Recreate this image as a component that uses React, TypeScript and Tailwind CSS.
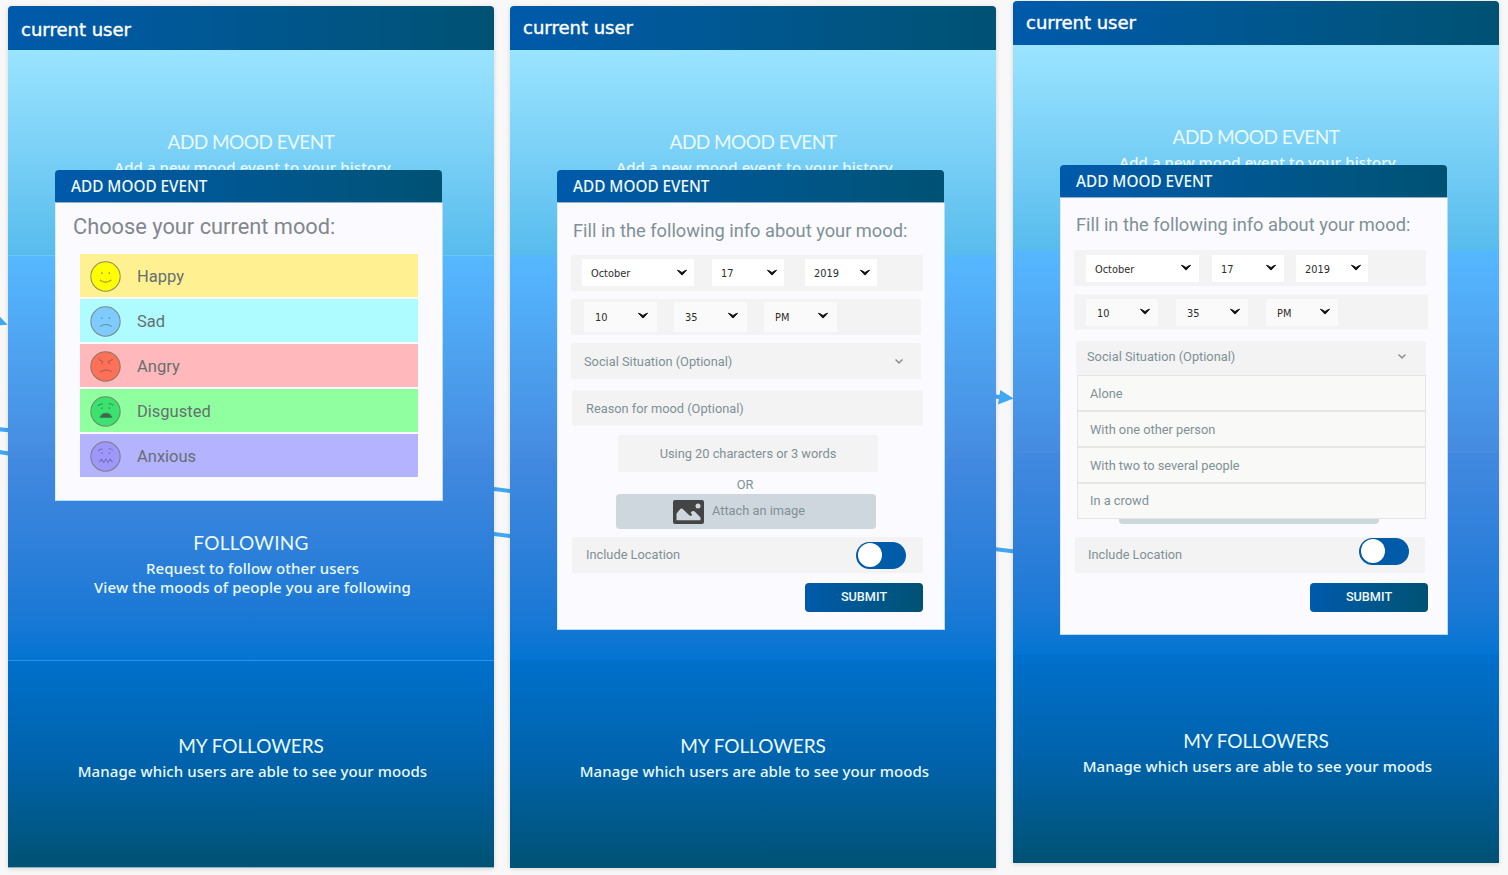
import type { ReactNode } from "react";

const NAV = "bg-linear-to-r from-[#005aab] via-[#00578f] to-[#005273]";

function Chevron({ className = "" }: { className?: string }) {
  return (
    <svg viewBox="0 0 12 8" className={`h-[8px] w-[12px] shrink-0 ${className}`}>
      <path d="M1.300 1.200Q3.500 1.300 6 3.600Q8.500 1.300 10.700 1.200L6.300 5.900H5.700Z" fill="#111" stroke="#111" strokeWidth="0.8" strokeLinejoin="round" />
    </svg>
  );
}

function ThinChevron({ className = "" }: { className?: string }) {
  return (
    <svg viewBox="0 0 10 7" className={`h-[7px] w-[10px] shrink-0 ${className}`}>
      <path d="M1.500 1.500 5 4.900 8.500 1.500" fill="none" stroke="#8d9496" strokeWidth="1.500" />
    </svg>
  );
}

function Select({ value, className }: { value: string; className: string }) {
  return (
    <div className={`flex items-center justify-between font-['DejaVu_Sans',sans-serif] text-[9.800px] leading-[12px] text-[#2c2c2c] ${className}`}>
      <span className="pt-[3px]">{value}</span>
      <Chevron />
    </div>
  );
}

type Mood = { name: string; row: string; fill: string; stroke: string; face: ReactNode };

const MOODS: Mood[] = [
  {
    name: "Happy",
    row: "bg-[#fff192]",
    fill: "#ffff00",
    stroke: "#8f8a3c",
    face: <path d="M9.500 18.300Q15 22.800 20.800 18.300" />,
  },
  {
    name: "Sad",
    row: "bg-[#aefcff]",
    fill: "#7fcbff",
    stroke: "#5c93ab",
    face: <path d="M9.500 20Q15.500 15.800 21 19.800" />,
  },
  {
    name: "Angry",
    row: "bg-[#ffb8bb]",
    fill: "#ff7059",
    stroke: "#a35a55",
    face: (
      <>
        <path d="M9.500 20.500Q15.500 16.500 21 19.800" />
        <path d="M8.500 8.300 13 10.500M21.800 8.300 17 10.500" />
      </>
    ),
  },
  {
    name: "Disgusted",
    row: "bg-[#8fff9f]",
    fill: "#3ce270",
    stroke: "#2f8e50",
    face: (
      <>
        <path d="M9.800 20.800Q11 16.800 15.500 16.700 20 16.800 21 20.800Z" fill="#505c50" />
        <path d="M7.500 9.500Q9.500 7.500 12.500 7.800M18 7.500Q21 7.300 22.500 9" />
      </>
    ),
  },
  {
    name: "Anxious",
    row: "bg-[#b3b3ff]",
    fill: "#a097fb",
    stroke: "#7771bd",
    face: (
      <>
        <path d="M9 20.500 11.300 17.500 13.300 20.800 15.500 17.500 17.500 20.800 19.500 17.500 21.800 20.500" />
        <path d="M8 9.800Q9.500 7.700 12.300 7.800M18 7.600Q21 7.500 22 9.300" />
      </>
    ),
  },
];

function MoodRow({ mood }: { mood: Mood }) {
  return (
    <li className={`flex h-[43px] items-center pl-[10px] ${mood.row}`}>
      <svg viewBox="0 0 30 30" className="mt-px h-[31px] w-[31px]" fill="none" stroke={mood.stroke} strokeWidth="1">
        <circle cx="15" cy="15" r="14.200" fill={mood.fill} stroke="#6f7460" strokeOpacity="0.8" />
        <circle cx="11.500" cy="11.800" r="0.800" fill={mood.stroke} stroke="none" />
        <circle cx="18.700" cy="11.800" r="0.800" fill={mood.stroke} stroke="none" />
        {mood.face}
      </svg>
      <span className="mt-px ml-[16px] h-[18px] overflow-hidden text-[16.500px] leading-[20px] text-[#666f70]">{mood.name}</span>
    </li>
  );
}

function Caption({ title, className, titleClass = "", children }: { title: string; className: string; titleClass?: string; children: ReactNode }) {
  return (
    <div className={`text-center text-[#e9faff] ${className}`}>
      <h2 className={`font-['Lato',sans-serif] text-[19px] leading-[24px] ${titleClass}`}>{title}</h2>
      <div className="mt-[4px] pl-[3px] font-['Noto_Sans',sans-serif] text-[15px] leading-[19px] font-medium tracking-[0.080px]">{children}</div>
    </div>
  );
}

function Screen({
  className = "",
  userClass = "",
  divided = false,
  following,
  children,
}: {
  className?: string;
  userClass?: string;
  divided?: boolean;
  following?: ReactNode;
  children: ReactNode;
}) {
  return (
    <section className={`relative flex h-[862px] w-[486px] shrink-0 flex-col overflow-hidden rounded-t-[4px] shadow-[0_1px_5px_rgba(0,0,0,0.14)] ${className}`}>
      <header className={`flex h-[44px] shrink-0 items-center pl-[13px] ${NAV}`}>
        <h1 className={`font-['DejaVu_Sans',sans-serif] text-[18px] leading-[22px] text-white [-webkit-text-stroke:0.4px_white] ${userClass}`}>current user</h1>
      </header>
      <div className="h-[205px] shrink-0 bg-linear-to-b from-[#9ae4ff] to-[#57bced]">
        <Caption title="ADD MOOD EVENT" titleClass="tracking-[-0.550px]" className="pt-[80px]">
          Add a new mood event to your history
        </Caption>
      </div>
      <div className={`h-[203px] shrink-0 bg-linear-to-b from-[#56b8ff] to-[#458be0] ${divided ? "border-t border-[#6ac6fb]" : ""}`} />
      <div className="h-[202px] shrink-0 bg-linear-to-b from-[#4289e0] to-[#0274d2]">{following}</div>
      <div className={`grow bg-linear-to-b from-[#0070cc] via-[#0062aa] to-[#005273] ${divided ? "border-t border-t-[#2d93e2]" : ""}`}>
        <Caption title="MY FOLLOWERS" titleClass="tracking-[-0.050px]" className={divided ? "pt-[73px]" : "pt-[74px]"}>
          Manage which users are able to see your moods
        </Caption>
      </div>
      {children}
    </section>
  );
}

function Modal({ className, children }: { className: string; children: ReactNode }) {
  return (
    <div className={`absolute top-[164px] left-[47px] flex w-[388px] flex-col font-['Roboto',sans-serif] ${className}`}>
      <div className={`flex h-[32px] w-[387px] shrink-0 items-center rounded-t-[4px] pl-[16px] ${NAV}`}>
        <h3 className="font-['Noto_Sans',sans-serif] text-[15.300px] leading-[20px] font-medium text-[#eefaff]">ADD MOOD EVENT</h3>
      </div>
      <div className="flex grow flex-col border border-t-[#8fb0cc] border-r-[#b9dcf5] border-b-[#b9dcf5] border-l-[#dcebfb] bg-[#fbfaff]">{children}</div>
    </div>
  );
}

function Toggle({ className = "" }: { className?: string }) {
  return (
    <div className={`flex h-[27px] w-[50px] items-center rounded-full bg-[#005ba9] pl-[2px] ${className}`}>
      <div className="size-[24px] rounded-full bg-white" />
    </div>
  );
}

function Submit({ className }: { className: string }) {
  return (
    <button className={`h-[29px] w-[118px] shrink-0 rounded-[4px] pb-[2px] text-[12.700px] leading-[16px] font-medium text-[#f0f8ff] ${NAV} ${className}`}>SUBMIT</button>
  );
}

const FIELD = "flex shrink-0 items-center rounded-[2px] bg-[#f3f3f3] text-[12.800px] leading-[16px] text-[#7f9197]";
const PROMPT = "text-[18.250px] leading-[22px] text-[#7f9197]";

function EventForm() {
  return (
    <>
      <p className={`mt-[17px] ml-[15px] ${PROMPT}`}>Fill in the following info about your mood:</p>
      <div className={`mt-[13px] ml-[13px] h-[36px] w-[352px] ${FIELD}`}>
        <Select value="October" className="mb-px ml-[11px] h-[27px] w-[112px] bg-white pr-[6px] pl-[9px]" />
        <Select value="17" className="mb-px ml-[18px] h-[27px] w-[72px] bg-white pr-[6px] pl-[9px]" />
        <Select value="2019" className="mb-px ml-[21px] h-[27px] w-[72px] bg-white pr-[6px] pl-[9px]" />
      </div>
      <div className={`mt-[8px] ml-[13px] h-[36px] w-[350px] ${FIELD}`}>
        <Select value="10" className="ml-[13px] h-[30px] w-[73px] bg-[#fafafa] pr-[8px] pb-[2px] pl-[11px]" />
        <Select value="35" className="ml-[17px] h-[30px] w-[73px] bg-[#fafafa] pr-[8px] pb-[2px] pl-[11px]" />
        <Select value="PM" className="ml-[17px] h-[30px] w-[73px] bg-[#fafafa] pr-[8px] pb-[2px] pl-[11px]" />
      </div>
      <div className={`mt-[8px] ml-[13px] h-[36px] w-[350px] justify-between pt-px pr-[17px] pl-[13px] ${FIELD}`}>
        Social Situation (Optional)
        <ThinChevron />
      </div>
      <div className={`mt-[11px] ml-[14px] h-[36px] w-[351px] pt-px pl-[14px] ${FIELD}`}>Reason for mood (Optional)</div>
      <div className={`mt-[9px] ml-[60px] h-[37px] w-[260px] justify-center ${FIELD}`}>Using 20 characters or 3 words</div>
      <p className="mt-[5px] ml-[57px] h-[17px] w-[260px] text-center text-[12.800px] leading-[16px] text-[#7f9197]">OR</p>
      <div className="ml-[58px] flex h-[35px] w-[260px] shrink-0 items-center rounded-[4px] bg-[#cfd7de] pl-[57px] text-[12.800px] leading-[16px] text-[#7f9197]">
        <svg viewBox="0 0 31 24" className="h-[24px] w-[31px]">
          <rect width="31" height="24" rx="2" fill="#444" />
          <path d="M3.500 20.300V13.500L7.500 8.800Q8.500 8 9.500 8.800L16.500 15.400Q18.500 16.500 19.200 14.700L17.600 12.700 19 11.300Q20.500 10.500 22 11.800L27.500 17.500V20.300Z" fill="#cfd7de" />
          <circle cx="25" cy="6" r="2.500" fill="#cfd7de" />
        </svg>
        <span className="ml-[8px] pb-[2px]">Attach an image</span>
      </div>
      <div className={`mt-[8px] ml-[14px] h-[36px] w-[351px] justify-between pr-[17px] pl-[14px] ${FIELD}`}>
        Include Location
        <Toggle />
      </div>
      <Submit className="mt-[10px] ml-[247px]" />
    </>
  );
}

const OPTIONS = ["Alone", "With one other person", "With two to several people", "In a crowd"];

function EventFormExpanded() {
  return (
    <>
      <p className={`mt-[16px] ml-[15px] ${PROMPT}`}>Fill in the following info about your mood:</p>
      <div className={`mt-[14px] ml-[13px] h-[36px] w-[352px] ${FIELD}`}>
        <Select value="October" className="ml-[12px] h-[27px] w-[113px] bg-white pr-[7px] pl-[9px]" />
        <Select value="17" className="ml-[13px] h-[27px] w-[72px] bg-white pr-[7px] pl-[9px]" />
        <Select value="2019" className="ml-[12px] h-[27px] w-[72px] bg-white pr-[6px] pl-[9px]" />
      </div>
      <div className={`mt-[8px] ml-[13px] h-[36px] w-[354px] ${FIELD}`}>
        <Select value="10" className="ml-[12px] h-[27px] w-[72px] bg-[#fafafa] pr-[7px] pl-[11px]" />
        <Select value="35" className="ml-[18px] h-[27px] w-[72px] bg-[#fafafa] pr-[7px] pl-[11px]" />
        <Select value="PM" className="ml-[18px] h-[27px] w-[72px] bg-[#fafafa] pr-[7px] pl-[11px]" />
      </div>
      <div className={`mt-[11px] ml-[15px] h-[34px] w-[350px] justify-between pr-[19px] pb-[3px] pl-[11px] ${FIELD}`}>
        Social Situation (Optional)
        <ThinChevron />
      </div>
      <ul className="ml-[16px] w-[349px] border border-[#e4e4e4] bg-[#f9f9f7] text-[12.800px] leading-[16px] text-[#7f9197]">
        {OPTIONS.map((option) => (
          <li key={option} className="flex h-[36px] items-center border-b-2 border-[#e6e6e6] pt-[2px] pl-[12px] last:h-[34px] last:border-b-0 last:pt-0">
            {option}
          </li>
        ))}
      </ul>
      <div className="ml-[58px] h-[5px] w-[260px] shrink-0 rounded-b-[4px] bg-[#cfd7de]" />
      <div className={`mt-[13px] ml-[14px] h-[36px] w-[350px] justify-between pr-[16px] pl-[13px] ${FIELD}`}>
        Include Location
        <Toggle className="mb-[8px]" />
      </div>
      <Submit className="mt-[10px] ml-[249px]" />
    </>
  );
}

function Connectors() {
  return (
    <svg viewBox="0 0 1508 875" className="absolute inset-0 h-[875px] w-[1508px]" fill="none" stroke="#41a7f0" strokeWidth="4">
      <path d="M-4 429 12 430.500M-4 451.500 12 454M490 488.500 514 491.500M490 533.500 514 536.500M992 396 1001 397.300M992 548.700 1017 551.700" />
      <path d="M-8 308 7.500 324.800-6 325.500ZM1000.300 390 1013.500 398.500 998 404.500Z" fill="#41a7f0" stroke="none" />
    </svg>
  );
}

export default function App() {
  return (
    <main className="relative flex h-[875px] w-[1508px] overflow-hidden bg-[#f8f8f8]">
      <Connectors />
      <Screen
        divided
        className="mt-[6px] ml-[8px] border-b border-[#8fb3c2]"
        userClass="pt-[3px]"
        following={
          <Caption title="FOLLOWING" titleClass="tracking-[0.250px]" className="pt-[73px]">
            <p>Request to follow other users</p>
            <p>View the moods of people you are following</p>
          </Caption>
        }
      >
        <Modal className="h-[331px]">
          <p className="mt-[11px] ml-[17px] text-[21.800px] leading-[26px] text-[#82878e]">Choose your current mood:</p>
          <ul className="mt-[14px] ml-[24px] flex w-[338px] flex-col gap-[2px]">
            {MOODS.map((mood) => (
              <MoodRow key={mood.name} mood={mood} />
            ))}
          </ul>
        </Modal>
      </Screen>
      <Screen className="mt-[6px] ml-[16px]">
        <Modal className="h-[460px]">
          <EventForm />
        </Modal>
      </Screen>
      <Screen className="mt-px ml-[17px]">
        <Modal className="h-[470px]">
          <EventFormExpanded />
        </Modal>
      </Screen>
    </main>
  );
}
